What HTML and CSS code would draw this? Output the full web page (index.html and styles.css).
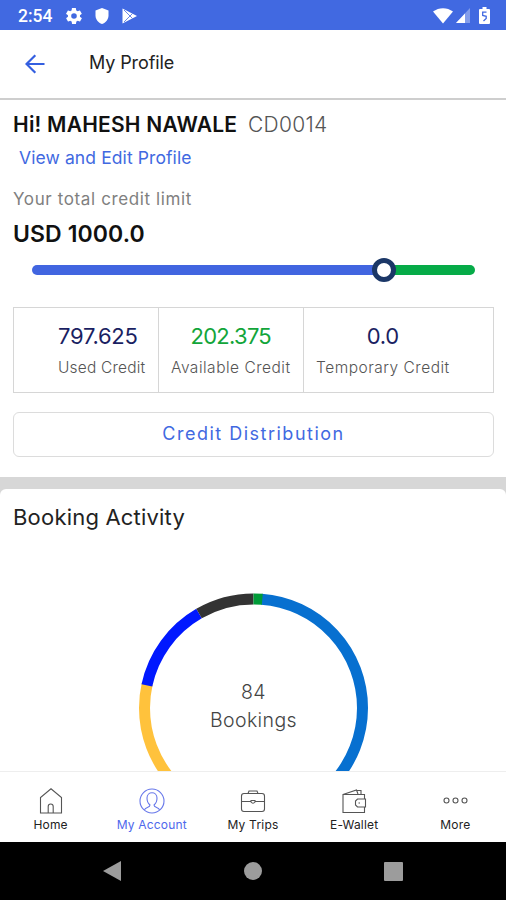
FILE: index.html
```
<!DOCTYPE html>
<html lang="en">
<head>
    <meta charset="UTF-8">
    <meta name="viewport" content="width=device-width, initial-scale=1.0">
    <title>My Profile</title>
    <link rel="stylesheet" href="styles.css">
</head>
<body>
    <div class="status-bar">
        <span class="time">2:54</span>
        <svg class="gear" width="16" height="16" viewBox="2 2 20 20"><path fill="#fff" d="M19.4 13c0-.3.1-.6.1-1s0-.7-.1-1l2.1-1.600c.2-.2.2-.4.1-.6l-2-3.500c-.1-.2-.4-.3-.6-.2l-2.500 1c-.5-.4-1.100-.7-1.700-1l-.4-2.600c0-.3-.2-.5-.5-.5h-4c-.3 0-.5.2-.5.4l-.4 2.700c-.6.2-1.100.6-1.700 1l-2.500-1c-.2-.1-.5 0-.6.2l-2 3.500c-.1.2-.1.5.1.6L4.500 11c0 .3-.1.6-.1 1s0 .7.1 1l-2.100 1.600c-.2.200-.2.400-.1.600l2 3.500c.1.200.4.300.6.200l2.500-1c.5.400 1.100.7 1.700 1l.4 2.700c0 .2.200.4.500.4h4c.3 0 .5-.2.5-.4l.4-2.700c.6-.2 1.100-.6 1.700-1l2.500 1c.2.100.5 0 .6-.2l2-3.500c.1-.2.100-.5-.1-.6zM12 15.500a3.500 3.500 0 1 1 0-7 3.500 3.500 0 0 1 0 7z"/></svg>
        <svg class="shield" width="14" height="16" viewBox="0 0 14 16"><path fill="#fff" d="M7 0l6.500 2.500v5c0 4-2.700 7.200-6.500 8.500C3.200 14.700.5 11.500.5 7.500v-5z"/></svg>
        <svg class="play" width="15" height="16" viewBox="0 0 15 16"><path fill="#fff" d="M.5.5v15L15 8z"/><path stroke="#4169e1" stroke-width=".8" fill="none" d="M2 2l8.500 8.500M2 14l8.500-8.500"/></svg>
        <div class="status-right">
            <svg class="wifi" width="20" height="16" viewBox="0 0 20 16"><path fill="#fff" d="M0 3.500C6-1 14-1 20 3.500L10 15.500z"/></svg>
            <svg class="signal" width="14" height="15" viewBox="0 0 14 15"><path fill="#fff" opacity=".35" d="M0 15L14 0v15z"/><path fill="#fff" d="M0 15L9 5.400V15z"/></svg>
            <svg class="battery" width="11" height="17" viewBox="0 0 11 17"><path fill="#fff" d="M3.500 0h4v2H10a1 1 0 0 1 1 1v13a1 1 0 0 1-1 1H1a1 1 0 0 1-1-1V3a1 1 0 0 1 1-1h2.500z"/><path fill="none" stroke="#4169e1" stroke-width="1.300" d="M7.500 5.200h-3.800v3.300l3.500.8v2.200l-2.700 2.500"/></svg>
        </div>
    </div>

    <header class="header">
        <svg width="20" height="20" viewBox="0 0 20 20"><path fill="none" stroke="#345fe0" stroke-width="2.200" d="M19.500 10H1.800M10.300 1.200L1.500 10l8.800 8.800"/></svg>
        <h1 class="title">My Profile</h1>
    </header>

    <main class="content">
        <section class="profile">
            <div class="user"><strong class="name">Hi! MAHESH NAWALE</strong><span class="code">CD0014</span></div>
            <a class="edit-link">View and Edit Profile</a>
            <p class="limit-label">Your total credit limit</p>
            <p class="limit">USD 1000.0</p>

            <div class="slider">
                <div class="used"></div>
                <div class="thumb"></div>
                <div class="available"></div>
            </div>

            <div class="credits">
                <div class="credit">
                    <div class="credit-inner left">
                        <span class="value">797.625</span>
                        <span class="label">Used Credit</span>
                    </div>
                </div>
                <div class="credit">
                    <div class="credit-inner">
                        <span class="value green">202.375</span>
                        <span class="label wide">Available Credit</span>
                    </div>
                </div>
                <div class="credit">
                    <div class="credit-inner">
                        <span class="value">0.0</span>
                        <span class="label wide">Temporary Credit</span>
                    </div>
                </div>
            </div>

            <button class="distribution">Credit Distribution</button>
        </section>

        <section class="activity">
            <h2 class="activity-title">Booking Activity</h2>
            <div class="chart">
                <svg class="donut" width="230" height="230" viewBox="-115.500 -115 230 230">
                    <!-- one unit of path length per booking -->
                    <g fill="none" stroke-width="11" transform="rotate(-90)">
                        <circle r="109" pathLength="84" stroke="#0770d0" stroke-dasharray="42 84" stroke-dashoffset="-1"/>
                        <circle r="109" pathLength="84" stroke="#ffc23c" stroke-dasharray="23 84" stroke-dashoffset="-43"/>
                        <circle r="109" pathLength="84" stroke="#0018ff" stroke-dasharray="11.200 84" stroke-dashoffset="-65.800"/>
                        <circle r="109" pathLength="84" stroke="#333" stroke-dasharray="7 84" stroke-dashoffset="-77"/>
                        <circle r="109" pathLength="84" stroke="#009b38" stroke-dasharray="1.100 84"/>
                    </g>
                </svg>
                <div class="chart-label"><span>84</span><span>Bookings</span></div>
            </div>
        </section>
    </main>

    <nav class="tabs">
        <div class="tab">
            <svg width="24" height="26" viewBox="0 0 24 26"><path d="M1.500 25V9.500L12 .8l10.500 8.700V25zM9.200 25v-6.500a2.500 2.500 0 0 1 5 0V25"/></svg>
            <span>Home</span>
        </div>
        <div class="tab active">
            <svg width="26" height="26" viewBox="0 0 26 26"><circle cx="13" cy="13" r="12"/><path d="M5.500 22c.5-3 5.500-2 5.500-5-2-1.500-3-4-3-7 0-7 10-7 10 0 0 3-1 5.500-3 7 0 3 5 2 5.500 5"/></svg>
            <span>My Account</span>
        </div>
        <div class="tab">
            <svg width="26" height="26" viewBox="0 0 26 26"><rect x="1.500" y="5.500" width="23" height="18" rx="2.500"/><path d="M8 5.500l1-2.500h8l1 2.500M1.500 13.500h9.500M15 13.500h9.500M11 12.500h4v1.500q-2 2.500-4 0z"/></svg>
            <span>My Trips</span>
        </div>
        <div class="tab">
            <svg width="26" height="26" viewBox="0 0 26 26"><path d="M23.500 11V6.500H2V24.500h21.500V19M2 6.500L15.500 2l1.500 4M15.500 2.500h4.500v4M24.500 11h-8l-2 2v4l2 2h8zM17.500 15h1.500"/></svg>
            <span>E-Wallet</span>
        </div>
        <div class="tab">
            <svg width="26" height="26" viewBox="0 0 26 26"><circle cx="4.500" cy="12.500" r="2.500"/><circle cx="13.500" cy="12.500" r="2.500"/><circle cx="22.500" cy="12.500" r="2.500"/></svg>
            <span>More</span>
        </div>
    </nav>

    <div class="android-nav">
        <svg width="18" height="20" viewBox="0 0 18 20"><path fill="#9c9c9c" d="M18 0v20L0 10z"/></svg>
        <svg width="18" height="18" viewBox="0 0 18 18"><circle cx="9" cy="9" r="9" fill="#9c9c9c"/></svg>
        <svg width="19" height="19" viewBox="0 0 19 19"><rect width="19" height="19" rx="1" fill="#9c9c9c"/></svg>
    </div>
</body>
</html>
```

FILE: styles.css
```
* {
    box-sizing: border-box;
}

body {
    margin: 0;
    height: 900px;
    overflow: hidden;
    display: flex;
    flex-direction: column;
    font-family: Inter, "Open Sans", sans-serif;
    background-color: #fff;
}

h1, h2, p {
    margin: 0;
    font-weight: 400;
}

.status-bar {
    height: 30px;
    flex: none;
    display: flex;
    align-items: center;
    padding: 1px 16px 0 18px;
    background-color: #4169e1;
    color: #fff;
}

.time {
    font: 500 17.5px Roboto, sans-serif;
    width: 48px;
}

.shield {
    margin-left: 13px;
}

.play {
    margin-left: 13px;
}

.status-right {
    margin-left: auto;
    display: flex;
    align-items: center;
}

.signal {
    margin-left: 3px;
}

.battery {
    margin-left: 9px;
}

.header {
    height: 70px;
    flex: none;
    display: flex;
    align-items: center;
    padding-left: 25px;
    border-bottom: 2px solid #cecece;
}

.title {
    margin: -3px 0 0 44px;
    font-size: 18px;
    letter-spacing: -0.1px;
    color: #222;
}

.content {
    flex: 1;
    min-height: 0;
    overflow: hidden;
    background-color: #d7d7d7;
}

.profile {
    height: 377px;
    padding: 10px 12px 0 13px;
    background-color: #fff;
}

.user {
    display: flex;
    height: 30px;
    line-height: 30px;
    font-size: 21px;
    white-space: nowrap;
}

.name {
    width: 235px;
    font-weight: 600;
    letter-spacing: 0.22px;
    color: #111;
}

.code {
    color: #555;
    font-weight: 300;
    letter-spacing: 0.3px;
}

.edit-link {
    display: block;
    margin: 6px 0 0 6px;
    line-height: 24px;
    font-size: 17.5px;
    letter-spacing: 0.1px;
    color: #4169e1;
}

.limit-label {
    margin-top: 17px;
    line-height: 24px;
    font-size: 17px;
    letter-spacing: 0.62px;
    color: #808080;
}

.limit {
    margin-top: 7px;
    line-height: 32px;
    font-size: 23px;
    font-weight: 600;
    letter-spacing: 0.1px;
    color: #111;
}

.slider {
    display: flex;
    align-items: center;
    height: 23px;
    margin: 8px 19px 0;
}

.used {
    width: 341px;
    height: 10px;
    border-radius: 5px 0 0 5px;
    background-color: #4165e0;
}

.thumb {
    width: 24px;
    height: 24px;
    margin: 0 -1px;
    border: 5px solid #1b3767;
    border-radius: 50%;
    background-color: #fff;
    z-index: 1;
}

.available {
    flex: 1;
    height: 10px;
    border-radius: 0 5px 5px 0;
    background-color: #06ab48;
}

.credits {
    display: grid;
    grid-template-columns: 144px 145px 1fr;
    height: 86px;
    margin-top: 26px;
    border: 1px solid #d6d6d6;
}

.credit {
    padding: 12px 0 0 12px;
}

.credit + .credit {
    border-left: 1px solid #d6d6d6;
}

.credit-inner {
    display: inline-flex;
    flex-direction: column;
    align-items: center;
    white-space: nowrap;
}

.credit-inner.left {
    align-items: flex-start;
    margin-left: 32px;
}

.value {
    line-height: 32px;
    font-size: 22px;
    letter-spacing: -0.25px;
    color: #1a1f62;
}

.green {
    letter-spacing: -0.75px;
    color: #12a53a;
}

.label {
    line-height: 22px;
    margin-top: 5px;
    font-size: 15.5px;
    font-weight: 300;
    letter-spacing: 0.2px;
    color: #555;
}

.wide {
    letter-spacing: 0.5px;
}

.distribution {
    display: block;
    width: 100%;
    height: 45px;
    margin-top: 19px;
    padding: 0 0 3px;
    border: 1px solid #dcdcdc;
    border-radius: 6px;
    background-color: #fff;
    font-family: inherit;
    font-size: 18px;
    letter-spacing: 1.5px;
    color: #4169e1;
}

.activity {
    height: 300px;
    margin-top: 12px;
    padding: 12px 13px 0;
    border-radius: 6px 6px 0 0;
    background-color: #fff;
}

.activity-title {
    line-height: 32px;
    font-size: 22px;
    letter-spacing: 0.2px;
    color: #222;
}

.chart {
    display: grid;
    width: 230px;
    margin: 60px auto 0;
}

.donut, .chart-label {
    grid-area: 1 / 1;
}

.chart-label {
    display: flex;
    flex-direction: column;
    align-items: center;
    padding: 85px 0 0 1px;
    line-height: 28px;
    font-size: 19.5px;
    font-weight: 300;
    letter-spacing: 0.4px;
    color: #444;
}

.tabs {
    height: 71px;
    flex: none;
    display: grid;
    grid-template-columns: repeat(5, 1fr);
    border-top: 1px solid #eee;
    background-color: #fff;
}

.tab {
    display: flex;
    flex-direction: column;
    align-items: center;
    padding-top: 16px;
    font-size: 12px;
    line-height: 16px;
    letter-spacing: 0.2px;
    color: #222;
    white-space: nowrap;
}

.tab svg {
    height: 26px;
    margin-bottom: 3px;
    fill: none;
    stroke: #555;
    stroke-width: 1.1;
}

.tab.active {
    color: #4e68ec;
}

.tab.active svg {
    stroke: #6878ea;
}

.android-nav {
    height: 58px;
    flex: none;
    display: flex;
    justify-content: space-between;
    align-items: center;
    padding: 0 103px;
    background-color: #000;
}
```
